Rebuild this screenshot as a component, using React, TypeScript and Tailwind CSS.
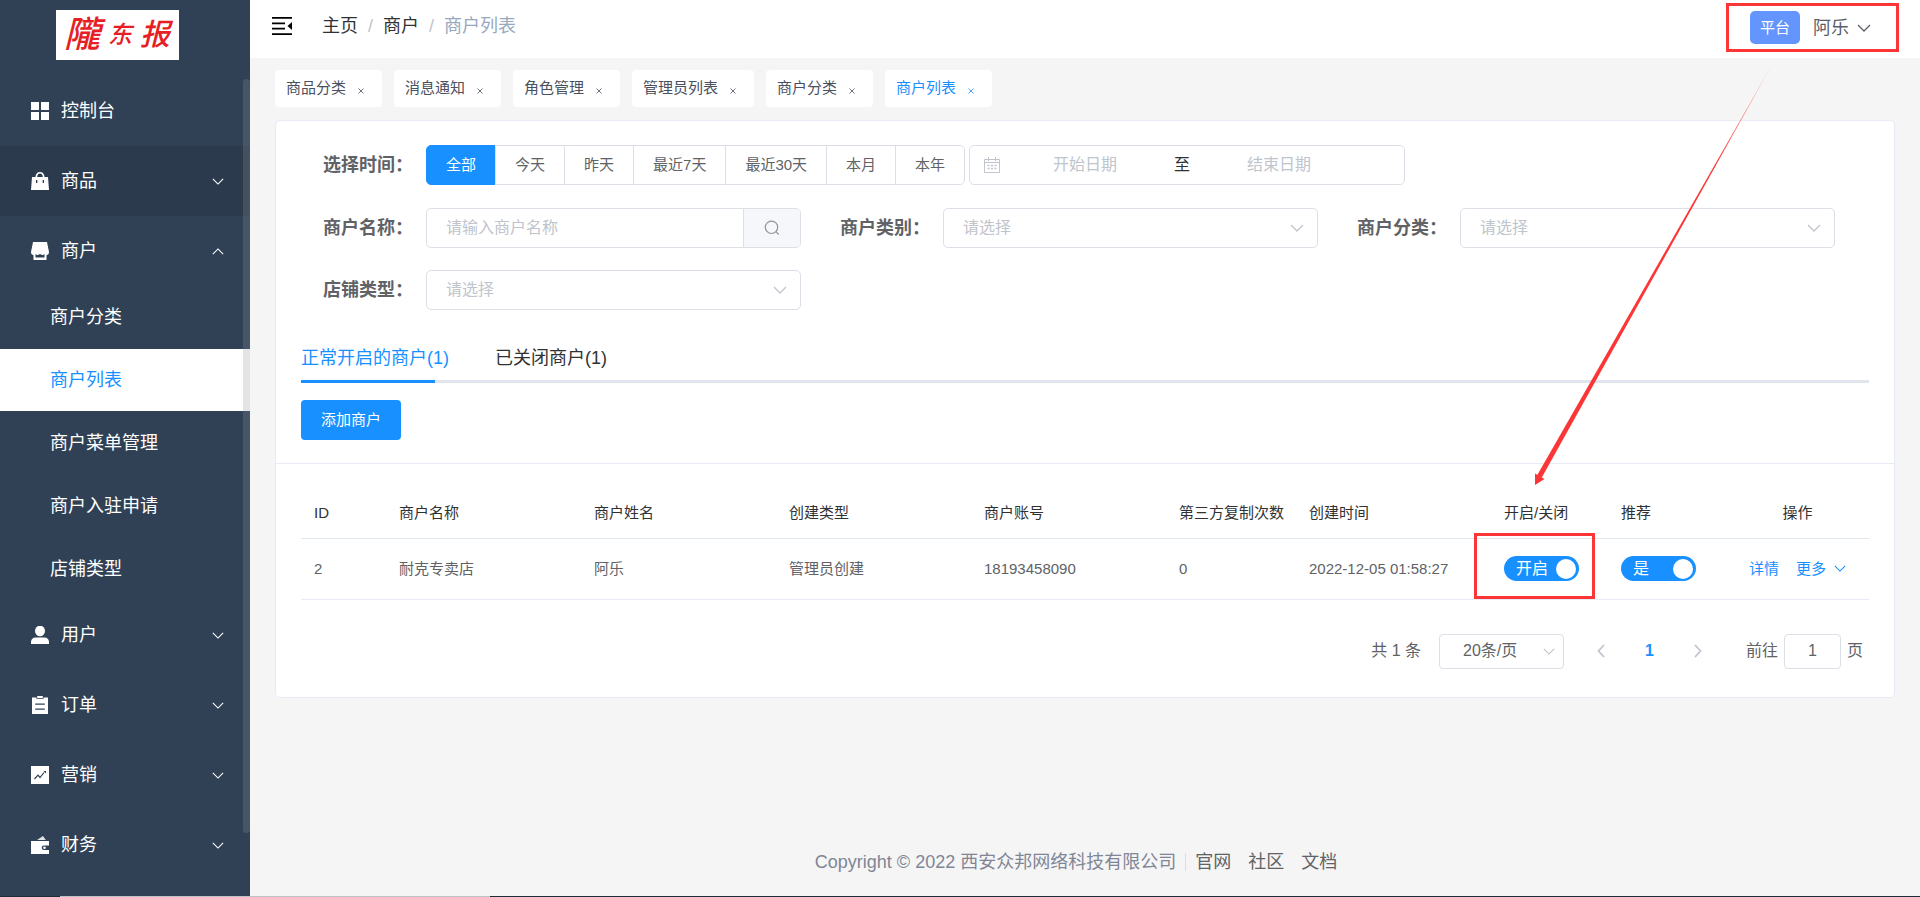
import { useState } from 'react'
import type { ReactNode } from 'react'

const MENU_TOP = [
  { label: '控制台', icon: 'grid', arrow: '' },
  { label: '商品', icon: 'bag', arrow: 'down' },
  { label: '商户', icon: 'shop', arrow: 'up' },
]

const SUB_MENU = ['商户分类', '商户列表', '商户菜单管理', '商户入驻申请', '店铺类型']

const MENU_BOTTOM = [
  { label: '用户', icon: 'user', arrow: 'down' },
  { label: '订单', icon: 'order', arrow: 'down' },
  { label: '营销', icon: 'chart', arrow: 'down' },
  { label: '财务', icon: 'wallet', arrow: 'down' },
]

const PAGE_TABS = ['商品分类', '消息通知', '角色管理', '管理员列表', '商户分类', '商户列表']
const TIMES = ['全部', '今天', '昨天', '最近7天', '最近30天', '本月', '本年']

const ICONS: Record<string, ReactNode> = {
  grid: <path d="M0 0h8v8H0zM10 0h8v8h-8zM0 10h8v8H0zM10 10h8v8h-8z" />,
  bag: (
    <path fillRule="evenodd" d="M1 5h3.500C4.500 2 6.300 0 9 0s4.500 2 4.500 5H17l1 13H0zM6.200 5h5.600C11.700 3 10.700 1.600 9 1.600S6.300 3 6.200 5zM5 8v3h1.300V8zM11.700 8v3H13V8z" />
  ),
  shop: (
    <>
      <path d="M2 0h14l2 10c0 1.800-1 3-2.300 3-1 0-1.700-.6-2.200-1.300-.5.7-1.300 1.300-2.300 1.300-.9 0-1.700-.5-2.200-1.200-.5.7-1.300 1.200-2.200 1.200-1 0-1.800-.6-2.300-1.300C4 12.400 3.300 13 2.300 13 1 13 0 11.800 0 10z" />
      <path d="M2.500 12h2v3.500h9V12h2v6h-13z" />
    </>
  ),
  user: (
    <>
      <ellipse cx="9" cy="5" rx="5" ry="5.300" />
      <path d="M0 18v-2c0-2.800 2-4.500 4.500-4.500h9C16 11.500 18 13.200 18 16v2z" />
    </>
  ),
  order: (
    <path fillRule="evenodd" d="M1 1.500h4.500V3h7V1.500H17V18H1zM6.200 0h5.600v2.200H6.200zM4.200 7.500v1.200h9.600V7.500zM4.200 12.500v1.200h9.600v-1.200z" />
  ),
  chart: (
    <>
      <path d="M0 0h18v18H0z" />
      <path d="M3.500 13l3.500-3.800 2 2.300 4-5" fill="none" stroke="#304156" strokeWidth="1.200" />
      <path d="M12.500 5H15v2.500z" fill="#304156" />
    </>
  ),
  wallet: (
    <>
      <path d="M6 4l6-4 2.800 4z" opacity=".85" />
      <path fillRule="evenodd" d="M0 5h18v4.500h-5a2.300 2.300 0 000 4.600h5V18H0z" />
      <circle cx="13.500" cy="11.800" r="1.300" />
    </>
  ),
}

function Chevron({ className, up = false }: { className: string; up?: boolean }) {
  return (
    <svg viewBox="0 0 14 8" fill="none" stroke="currentColor" strokeWidth="1.300" className={className} aria-hidden="true">
      <path d={up ? 'M1 7l6-6 6 6' : 'M1 1l6 6 6-6'} />
    </svg>
  )
}

function MenuItem({ label, icon, arrow }: { label: string; icon: string; arrow: string }) {
  return (
    <a
      href="#"
      className={`flex h-[70px] items-center pl-[31px] pr-[26px] text-lg text-white ${icon === 'bag' ? 'bg-[#2b3b4d]' : ''}`}
    >
      <svg viewBox="0 0 18 18" width="18" height="18" fill="currentColor" aria-hidden="true">
        {ICONS[icon]}
      </svg>
      <span className="ml-3 flex-1">{label}</span>
      {arrow && <Chevron className="h-[7px] w-3" up={arrow === 'up'} />}
    </a>
  )
}

function Sidebar() {
  return (
    <aside className="relative w-[250px] shrink-0 overflow-hidden bg-[#304156]">
      <div className="flex h-[76px] justify-center pt-[10px] pr-4">
        {/* Logo */}
        <div className="flex h-[50px] w-[123px] items-center justify-center gap-2 bg-white italic text-[#e61e25]">
          <span className="text-4xl font-medium">隴</span>
          <span className="text-2xl font-medium">东</span>
          <span className="text-3xl font-medium">报</span>
        </div>
      </div>
      <nav>
        {MENU_TOP.map(m => <MenuItem key={m.label} {...m} />)}
        <div className="flex flex-col gap-px">
          {SUB_MENU.map(label => (
            <a
              key={label}
              href="#"
              className={`flex h-[62px] items-center pl-[50px] text-lg ${
                label === '商户列表' ? 'bg-white text-[#1890ff]' : 'text-white'
              }`}
            >
              {label}
            </a>
          ))}
        </div>
        {MENU_BOTTOM.map(m => <MenuItem key={m.label} {...m} />)}
      </nav>
      {/* Scroll thumb */}
      <div className="absolute top-[79px] right-0 h-[754px] w-[7px] rounded-full bg-[#909399]/25" />
    </aside>
  )
}

function Header() {
  return (
    <header className="flex h-[58px] items-center justify-between bg-white pr-[21px] pb-[3px] pl-[22px]">
      <div className="flex items-center pb-[3px]">
        <button aria-label="收起菜单">
          <svg viewBox="0 0 20 18" width="20" height="18" fill="#000" className="block">
            <path d="M0 0h20v1.800H0zM0 5.400h13v1.800H0zM0 10.800h13v1.800H0zM0 16.200h20V18H0zM20 5v8l-4.500-4z" />
          </svg>
        </button>
        <nav className="ml-[30px] flex gap-[10px] text-lg text-[#303133]">
          <a href="#">主页</a>
          <span className="text-[#c0c4cc]">/</span>
          <a href="#">商户</a>
          <span className="text-[#c0c4cc]">/</span>
          <span className="text-[#97a8be]">商户列表</span>
        </nav>
      </div>
      <div className="relative flex h-[49px] items-center pr-7 pl-6">
        <span className="rounded-[5px] bg-[#6495fd] px-[10px] py-[5px] text-[15px] leading-[23px] text-white">平台</span>
        <button className="ml-[13px] flex items-center gap-2 text-lg text-[#5a5e66]">
          阿乐
          <Chevron className="h-2 w-[14px]" />
        </button>
        <span className="pointer-events-none absolute inset-0 border-[3px] border-[#fc3636]" />
      </div>
    </header>
  )
}

function Field({ label, id, children }: { label: string; id: string; children: ReactNode }) {
  return (
    <div className="flex items-center">
      <label htmlFor={id} className="w-[125px] shrink-0 pl-[22px] text-lg leading-6 font-bold text-[#606266]">
        {label}：
      </label>
      {children}
    </div>
  )
}

function SelectBox({ id }: { id: string }) {
  return (
    <div className="relative min-w-0 flex-1">
      <select
        id={id}
        className="h-10 w-full appearance-none rounded-[5px] border border-[#dcdfe6] bg-white px-[19px] text-base text-[#c0c4cc] outline-none"
      >
        <option>请选择</option>
      </select>
      <Chevron className="pointer-events-none absolute top-4 right-[14px] h-2 w-[14px] text-[#c0c4cc]" />
    </div>
  )
}

function Switch({ text, name }: { text: string; name: string }) {
  const [on, setOn] = useState(true)
  return (
    <label className={`inline-flex h-[25px] w-[75px] cursor-pointer items-center rounded-full pr-[3px] pl-3 align-middle ${on ? 'bg-[#1890ff]' : 'bg-[#dcdfe6]'}`}>
      <input type="checkbox" className="sr-only" aria-label={name} checked={on} onChange={e => setOn(e.target.checked)} />
      <span className="flex-1 text-base leading-[25px] text-white">{text}</span>
      <span className="size-5 rounded-full bg-white" />
    </label>
  )
}

function Filters() {
  const [time, setTime] = useState('全部')
  return (
    <form className="pr-[34px]">
      <div className="mb-[23px] flex items-center">
        <span className="w-[125px] shrink-0 pl-[22px] text-lg leading-6 font-bold text-[#606266]">选择时间：</span>
        <div className="flex h-10 shrink-0" role="radiogroup" aria-label="选择时间">
          {TIMES.map(t => (
            <label
              key={t}
              className={`-ml-px flex cursor-pointer items-center border px-[19px] text-[15px] first:ml-0 first:rounded-l-[5px] last:rounded-r-[5px] ${
                time === t ? 'border-[#1890ff] bg-[#1890ff] text-white' : 'border-[#dcdfe6] text-[#606266]'
              }`}
            >
              <input type="radio" name="time" className="sr-only" checked={time === t} onChange={() => setTime(t)} />
              {t}
            </label>
          ))}
        </div>
        <div className="ml-1 flex h-10 w-[436px] items-center rounded-[5px] border border-[#dcdfe6] pl-[14px] text-base">
          <svg viewBox="0 0 16 16" width="16" height="16" fill="none" stroke="#c0c4cc" aria-hidden="true">
            <path d="M.5 2.500h15v13H.5zM.5 5.500h15M4.500 0v4M11.500 0v4" />
            <path d="M3.500 8.500h9M3.500 11.500h9" strokeWidth="1.500" strokeDasharray="2 1.500" />
          </svg>
          <input aria-label="开始日期" placeholder="开始日期" className="w-[170px] text-center outline-none placeholder:text-[#c0c4cc]" />
          <span className="w-6 text-center text-[#303133]">至</span>
          <input aria-label="结束日期" placeholder="结束日期" className="w-[170px] text-center outline-none placeholder:text-[#c0c4cc]" />
        </div>
      </div>
      <div className="grid grid-cols-3 gap-x-[17px] gap-y-[22px]">
        <Field label="商户名称" id="mer-name">
          <div className="flex h-10 min-w-0 flex-1 overflow-hidden rounded-[5px] border border-[#dcdfe6]">
            <input id="mer-name" placeholder="请输入商户名称" className="min-w-0 flex-1 px-[19px] text-base outline-none placeholder:text-[#c0c4cc]" />
            <button type="button" aria-label="搜索" className="flex w-[57px] items-center justify-center border-l border-[#dcdfe6] bg-[#f5f7fa]">
              <svg viewBox="0 0 16 16" width="16" height="16" fill="none" stroke="#909399" strokeWidth="1.200">
                <circle cx="7.500" cy="7.300" r="6.200" />
                <path d="M12 11.700l2.800 2.800" />
              </svg>
            </button>
          </div>
        </Field>
        <Field label="商户类别" id="mer-kind"><SelectBox id="mer-kind" /></Field>
        <Field label="商户分类" id="mer-category"><SelectBox id="mer-category" /></Field>
        <Field label="店铺类型" id="mer-type"><SelectBox id="mer-type" /></Field>
      </div>
    </form>
  )
}

function MerchantTable() {
  return (
    <table className="w-full table-fixed text-[15px] leading-5">
      <thead>
        <tr className="h-[50px] border-b border-[#dfe6ec] text-left text-[#303133] [&>th]:px-[13px] [&>th]:font-normal">
          <th className="w-[85px]">ID</th>
          <th>商户名称</th>
          <th>商户姓名</th>
          <th>创建类型</th>
          <th>商户账号</th>
          <th className="w-[130px] whitespace-nowrap">第三方复制次数</th>
          <th>创建时间</th>
          <th className="w-[117px]">开启/关闭</th>
          <th className="w-[118px]">推荐</th>
          <th className="w-[143px] text-center">操作</th>
        </tr>
      </thead>
      <tbody>
        <tr className="h-[61px] border-b border-[#e6ebf5] text-[#606266] [&>td]:px-[13px]">
          <td>2</td>
          <td>耐克专卖店</td>
          <td>阿乐</td>
          <td>管理员创建</td>
          <td>18193458090</td>
          <td>0</td>
          <td className="whitespace-nowrap">2022-12-05 01:58:27</td>
          <td>
            <div className="relative flex w-[75px]">
              <Switch text="开启" name="开启/关闭" />
              <span className="pointer-events-none absolute -top-[23px] -right-4 -bottom-[18px] -left-[30px] border-[3px] border-[#fc3636]" />
            </div>
          </td>
          <td><Switch text="是" name="推荐" /></td>
          <td>
            <div className="flex items-center justify-center whitespace-nowrap text-[#1890ff]">
              <a href="#">详情</a>
              <button className="ml-[17px] flex items-center gap-2">
                更多
                <Chevron className="h-[7px] w-3" />
              </button>
            </div>
          </td>
        </tr>
      </tbody>
    </table>
  )
}

function Pagination() {
  return (
    <div className="mt-[34px] flex h-[35px] items-center justify-end pr-[6px] text-base text-[#606266]">
      <span>共 1 条</span>
      <div className="relative ml-[18px]">
        <select aria-label="每页条数" className="h-[35px] w-[125px] appearance-none rounded border border-[#dcdfe6] bg-white pl-[23px] outline-none">
          <option>20条/页</option>
        </select>
        <Chevron className="pointer-events-none absolute top-[14px] right-[9px] h-[7px] w-3 text-[#c0c4cc]" />
      </div>
      <button aria-label="上一页" className="ml-[33px] text-[#c0c4cc]">
        <svg viewBox="0 0 8 14" width="8" height="14" fill="none" stroke="currentColor" strokeWidth="1.800"><path d="M7 1L1.500 7 7 13" /></svg>
      </button>
      <button className="mx-[40px] font-bold text-[#1890ff]">1</button>
      <button aria-label="下一页" className="text-[#c0c4cc]">
        <svg viewBox="0 0 8 14" width="8" height="14" fill="none" stroke="currentColor" strokeWidth="1.800"><path d="M1 1l5.500 6L1 13" /></svg>
      </button>
      <label htmlFor="page-jump" className="ml-[44px]">前往</label>
      <input id="page-jump" defaultValue="1" className="mx-[6px] h-[35px] w-[57px] rounded border border-[#dcdfe6] text-center outline-none" />
      <span>页</span>
    </div>
  )
}

export default function App() {
  return (
    <div className="relative flex min-h-screen flex-col bg-[#f5f5f5] font-['Liberation_Sans','Noto_Sans_CJK_SC',sans-serif]">
      <div className="flex flex-1">
        <Sidebar />
        <div className="flex min-w-0 flex-1 flex-col">
          <Header />
          <main className="flex-1 px-[25px] pt-3">
            <div className="flex gap-3">
              {PAGE_TABS.map(t => (
                <div
                  key={t}
                  className={`flex h-[37px] items-center gap-[11px] rounded bg-white pr-[17px] pl-[11px] text-[15px] ${
                    t === '商户列表' ? 'text-[#1890ff]' : 'text-[#495060]'
                  }`}
                >
                  <a href="#">{t}</a>
                  <button aria-label={`关闭${t}`} className="pt-[5px]">
                    <svg viewBox="0 0 8 8" width="8" height="8" fill="none" stroke="currentColor" strokeWidth=".8" className="block">
                      <path d="M1.500 1.500l5 5M6.500 1.500l-5 5" />
                    </svg>
                  </button>
                </div>
              ))}
            </div>

            <section className="mt-[13px] rounded-[5px] border border-[#e6ebf5] bg-white">
              <div className="border-b border-[#e6ebf5] px-[25px] pt-6 pb-[23px]">
                <Filters />
                <div role="tablist" className="mt-[25px] flex h-12 gap-[46px] border-b-[3px] border-[#dfe4ed] text-lg">
                  <button role="tab" aria-selected="true" className="relative text-[#1890ff]">
                    正常开启的商户(1)
                    <span className="absolute -bottom-[3px] left-0 h-[3px] w-[134px] bg-[#1890ff]" />
                  </button>
                  <button role="tab" aria-selected="false" className="text-[#303133]">已关闭商户(1)</button>
                </div>
                <button className="mt-[17px] block h-10 rounded bg-[#1890ff] px-5 text-[15px] text-white">添加商户</button>
              </div>
              <div className="px-[25px] pt-6 pb-7">
                <MerchantTable />
                <Pagination />
              </div>
            </section>
          </main>

          <footer className="flex items-center justify-center pb-[22px] pr-[18px] text-lg leading-6 text-[#606266]">
            <span className="text-[#808695]">Copyright © 2022 西安众邦网络科技有限公司</span>
            <span className="mx-[9px] h-[18px] w-px bg-[#dcdee2]" />
            <a href="#">官网</a>
            <a href="#" className="mx-[17px]">社区</a>
            <a href="#">文档</a>
          </footer>
        </div>
      </div>
      <div className="flex h-px bg-[#1f2d3a]">
        <span className="ml-[60px] w-[430px] bg-[#c0c0c4]" />
      </div>

      {/* Arrow from the account box to the switch */}
      <svg viewBox="0 0 240 424" width="240" height="424" className="pointer-events-none absolute top-[62px] right-[146px]" aria-hidden="true">
        <defs>
          <linearGradient id="fade" x1="1" y1="0" x2="0" y2="1">
            <stop offset="0" stopColor="#fc3636" stopOpacity=".3" />
            <stop offset=".25" stopColor="#fc3636" />
          </linearGradient>
        </defs>
        <path d="M239 1L3 413.500l4.500 2.500z" fill="url(#fade)" />
        <path d="M1 411.500l9.500 5.500L1 423z" fill="#fc3636" />
      </svg>
    </div>
  )
}
